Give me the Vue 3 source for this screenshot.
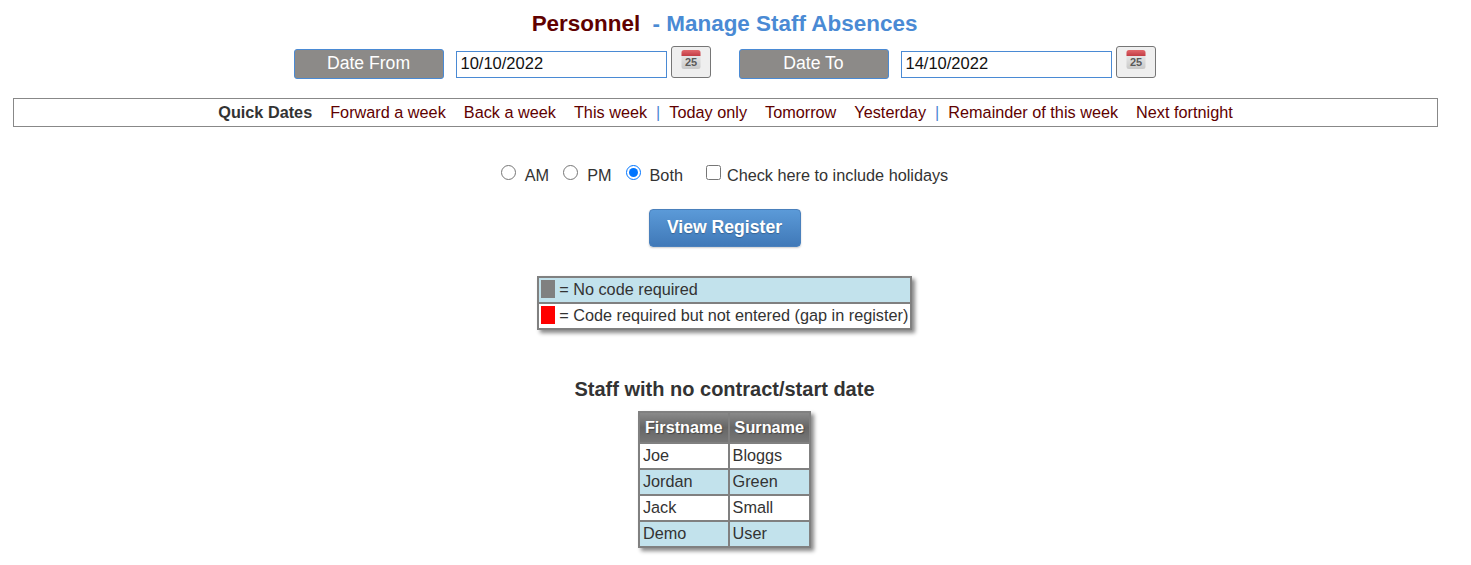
<template>
  <div class="page">
    <h1 class="title"><span class="title-main">Personnel</span>&nbsp; - Manage Staff Absences</h1>

    <div class="date-row">
      <template v-for="d in dates" :key="d.label">
        <div class="date-label">{{ d.label }}</div>
        <input class="date-input" type="text" :value="d.value" />
        <button class="cal-btn" type="button">
          <svg width="20" height="21" viewBox="0 0 20 21">
            <defs>
              <linearGradient id="calBody" x1="0" y1="0" x2="0" y2="1">
                <stop offset="0" stop-color="#f2f2f2" />
                <stop offset="1" stop-color="#c9c9c9" />
              </linearGradient>
              <linearGradient id="calTop" x1="0" y1="0" x2="0" y2="1">
                <stop offset="0" stop-color="#e2686c" />
                <stop offset="1" stop-color="#c23c44" />
              </linearGradient>
            </defs>
            <rect x="0.5" y="1" width="19" height="19" rx="2.5" fill="url(#calBody)" />
            <path d="M0.5 3.5a2.5 2.5 0 0 1 2.5-2.5h14a2.5 2.5 0 0 1 2.5 2.5v3.5h-19z" fill="url(#calTop)" />
            <text x="10" y="16.5" class="cal-num">25</text>
          </svg>
        </button>
      </template>
    </div>

    <div class="quick-dates">
      <b class="quick-title">Quick Dates</b>
      <template v-for="(q, i) in quickLinks" :key="i">
        <span v-if="q === '|'" class="sep">|</span>
        <a v-else class="quick-link" href="#">{{ q }}</a>
      </template>
    </div>

    <div class="options">
      <input class="radio" type="radio" name="period" /><label class="opt-label">AM</label>
      <input class="radio" type="radio" name="period" /><label class="opt-label">PM</label>
      <input class="radio" type="radio" name="period" checked /><label class="opt-label">Both</label>
      <input class="check" type="checkbox" /><label>Check here to include holidays</label>
    </div>

    <button class="view-btn" type="button">View Register</button>

    <table class="legend">
      <tbody>
        <tr class="alt">
          <td><span class="swatch grey"></span> = No code required</td>
        </tr>
        <tr>
          <td><span class="swatch red"></span> = Code required but not entered (gap in register)</td>
        </tr>
      </tbody>
    </table>

    <h2 class="staff-heading">Staff with no contract/start date</h2>

    <table class="staff">
      <thead>
        <tr>
          <th>Firstname</th>
          <th>Surname</th>
        </tr>
      </thead>
      <tbody>
        <tr v-for="(s, i) in staff" :key="s[0]" :class="{ alt: i % 2 === 1 }">
          <td>{{ s[0] }}</td>
          <td>{{ s[1] }}</td>
        </tr>
      </tbody>
    </table>
  </div>
</template>

<script setup>
const dates = [
  { label: 'Date From', value: '10/10/2022' },
  { label: 'Date To', value: '14/10/2022' }
]

const quickLinks = [
  'Forward a week',
  'Back a week',
  'This week',
  '|',
  'Today only',
  'Tomorrow',
  'Yesterday',
  '|',
  'Remainder of this week',
  'Next fortnight'
]

const staff = [
  ['Joe', 'Bloggs'],
  ['Jordan', 'Green'],
  ['Jack', 'Small'],
  ['Demo', 'User']
]
</script>

<style>
html,
body {
  margin: 0;
  background: #fff;
}
</style>

<style scoped>
.page {
  display: flex;
  flex-direction: column;
  align-items: center;
  font-family: "Liberation Sans", Arial, sans-serif;
  font-size: 16.25px;
  color: #333;
  padding: 0 35px 0 13px;
  height: 565px;
  box-sizing: border-box;
  overflow: hidden;
}

.title {
  margin: 11px 0 0;
  font-size: 22.45px;
  line-height: 26px;
  font-weight: 700;
  color: #4a8ad4;
}

.title-main {
  color: #600000;
}

.date-row {
  display: flex;
  align-items: flex-start;
  margin-top: 9px;
  height: 33px;
}

.date-label {
  width: 150px;
  height: 30px;
  margin-top: 3px;
  box-sizing: border-box;
  background: #8c8a88;
  border: 1px solid #4a8ad4;
  border-radius: 3px;
  color: #fff;
  font-size: 17.6px;
  line-height: 26px;
  text-align: center;
}

.date-input {
  width: 211px;
  height: 27px;
  margin: 5px 4px 0 12px;
  padding: 0 4px 2px;
  box-sizing: border-box;
  border: 1px solid #4a8ad4;
  font-family: inherit;
  font-size: 16.5px;
  color: #111;
  outline: none;
}

.cal-btn {
  width: 40px;
  height: 32px;
  padding: 0;
  margin-right: 28px;
  box-sizing: border-box;
  display: flex;
  align-items: flex-start;
  justify-content: center;
  padding-top: 2px;
  background: #efefef;
  border: 1px solid #767676;
  border-radius: 3px;
}

.cal-btn:last-child {
  margin-right: 0;
}

.cal-num {
  font-family: "Liberation Sans", Arial, sans-serif;
  font-size: 11px;
  font-weight: 700;
  fill: #5a5a5a;
  text-anchor: middle;
}

.quick-dates {
  align-self: stretch;
  margin: 19px -2px 0 0;
  height: 29px;
  box-sizing: border-box;
  border: 1px solid #888;
  line-height: 27px;
  text-align: center;
  white-space: nowrap;
}

.quick-title {
  color: #333;
}

.quick-link {
  margin-left: 18px;
  color: #600000;
  text-decoration: none;
}

.sep {
  margin-left: 9px;
  margin-right: -9px;
  color: #4a8ad4;
}

.options {
  display: flex;
  align-items: center;
  margin-top: 37px;
  height: 22px;
  line-height: 22px;
}

.radio {
  width: 15px;
  height: 15px;
  margin: 0 9px 6px 0;
}

.opt-label {
  margin-right: 14px;
}

.opt-label:nth-of-type(3) {
  margin-right: 23px;
}

.check {
  width: 15px;
  height: 15px;
  margin: 0 6px 6px 0;
}

.view-btn {
  margin-top: 23px;
  width: 152px;
  height: 38px;
  padding: 0 0 2px;
  background: linear-gradient(#5b9ad8, #4079b8);
  border: 1px solid #4a80bc;
  border-radius: 4px;
  color: #fff;
  font-family: inherit;
  font-size: 17.6px;
  font-weight: 700;
  text-shadow: 0 1px 1px rgba(0, 0, 0, 0.25);
  box-shadow: 0 1px 2px rgba(0, 0, 0, 0.2);
}

.legend {
  margin-top: 29px;
  border-collapse: collapse;
  border: 2px solid #808080;
  box-shadow: 3px 3px 4px #888;
}

.legend td {
  height: 22px;
  padding: 0 2px 2px;
  border: 2px solid #808080;
  line-height: 22px;
  white-space: nowrap;
}

.alt td {
  background: #c2e2ec;
}

.swatch {
  display: inline-block;
  width: 14px;
  height: 18px;
  vertical-align: -3px;
}

.swatch.grey {
  background: #808080;
}

.swatch.red {
  background: #f00;
}

.staff-heading {
  margin: 47px 0 0;
  font-size: 20px;
  line-height: 24px;
  font-weight: 700;
  color: #333;
}

.staff {
  margin-top: 10px;
  border-collapse: collapse;
  border: 2px solid #808080;
  box-shadow: 3px 3px 4px #888;
}

.staff th {
  height: 29px;
  padding: 0 5px;
  border: 2px solid #808080;
  background: linear-gradient(#8a8a8a, #666 50%, #777);
  color: #fff;
  text-align: center;
  text-shadow: 1px 1px 1px #444;
}

.staff td {
  height: 22px;
  padding: 0 3px 2px;
  border: 2px solid #808080;
}
</style>
